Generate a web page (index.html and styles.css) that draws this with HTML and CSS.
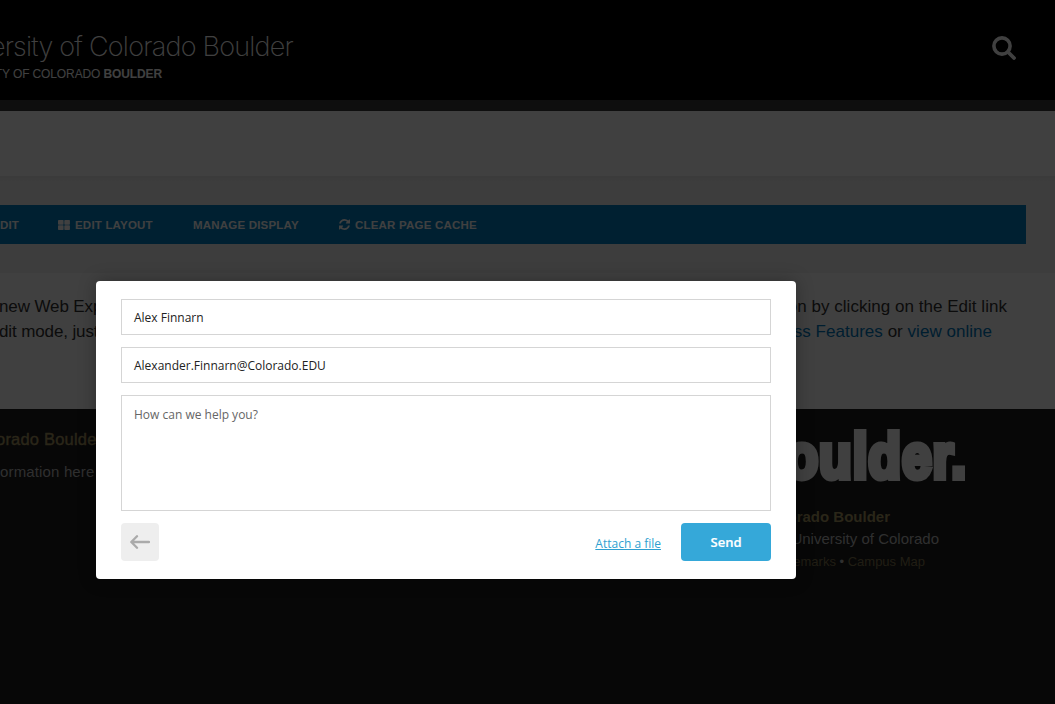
FILE: index.html
```
<!DOCTYPE html>
<html lang="en">
<head>
<meta charset="utf-8">
<title>University of Colorado Boulder</title>
<link rel="stylesheet" href="styles.css">
</head>
<body>
<div class="page">
  <header class="header">
    <div class="brand">
      <div class="site-name"><span>ersity of Colorado Boulder</span></div>
      <div class="site-sub"><span>TY OF COLORADO <b>BOULDER</b></span></div>
    </div>
    <svg class="search" width="24" height="24" viewBox="0 0 24 24" fill="none"><circle cx="10" cy="10" r="8.1" stroke="#fff" stroke-width="3.6"/><path d="M16 16l6 6" stroke="#fff" stroke-width="3.8" stroke-linecap="round"/></svg>
  </header>
  <div class="strip"></div>
  <div class="menu"></div>
  <section class="tools">
    <nav class="toolbar">
      <span class="tool edit"><i>DIT</i></span>
      <span class="tool layout"><svg width="12" height="10" viewBox="0 0 12 10" fill="#fff"><rect width="5.6" height="4.7" rx=".7"/><rect x="6.3" width="5.6" height="4.7" rx=".7"/><rect y="5.3" width="5.6" height="4.7" rx=".7"/><rect x="6.3" y="5.3" width="5.6" height="4.7" rx=".7"/></svg><i>EDIT LAYOUT</i></span>
      <span class="tool display"><i>MANAGE DISPLAY</i></span>
      <span class="tool cache"><svg width="11" height="11" viewBox="0 0 1536 1536" fill="#fff"><path d="M1511 928q0 5-1 7-64 268-268 434.500t-478 166.500q-146 0-282.500-55t-243.500-157l-129 129q-19 19-45 19t-45-19-19-45v-448q0-26 19-45t45-19h448q26 0 45 19t19 45-19 45l-137 137q71 66 161 102t187 36q134 0 250-65t186-179q11-17 53-117 8-23 30-23h192q13 0 22.500 9.500t9.500 22.500zm25-800v448q0 26-19 45t-45 19h-448q-26 0-45-19t-19-45 19-45l138-138q-148-137-349-137-134 0-250 65t-186 179q-11 17-53 117-8 23-30 23h-199q-13 0-22.500-9.500t-9.500-22.500v-7q65-268 270-434.500t480-166.500q146 0 284 55.500t245 156.500l130-129q19-19 45-19t45 19 19 45z"/></svg><i>CLEAR PAGE CACHE</i></span>
    </nav>
  </section>
  <main class="content">
    <div class="line"><span class="l1">new Web Express</span><span class="r1">section by clicking on the Edit link</span></div>
    <div class="line"><span class="l2">dit mode, just</span><span class="r2"><a>Express Features</a> or <a>view online</a></span></div>
  </main>
  <footer class="footer">
    <div class="foot-left">
      <div class="foot-title"><span>orado Boulder</span></div>
      <div class="foot-info"><span>ormation here</span></div>
    </div>
    <div class="foot-right">
      <div class="be"><span>boulder.</span></div>
      <div class="cu"><span>Colorado Boulder</span></div>
      <div class="regents"><span>University of Colorado</span></div>
      <div class="links"><span><a>Trademarks</a> • <a>Campus Map</a></span></div>
    </div>
  </footer>
</div>
<div class="overlay">
  <form class="modal">
    <div class="field">Alex Finnarn</div>
    <div class="field email">Alexander.Finnarn@Colorado.EDU</div>
    <div class="field message">How can we help you?</div>
    <div class="actions">
      <button class="back" type="button" aria-label="Back"><svg width="20" height="14" viewBox="0 0 20 14" fill="none" stroke="#aaa" stroke-width="2.3" stroke-linecap="round" stroke-linejoin="round"><path d="M19 7H1.4M7 1.2L1.3 7 7 12.8"/></svg></button>
      <a class="attach">Attach a file</a>
      <button class="send" type="button">Send</button>
    </div>
  </form>
</div>
</body>
</html>
```
FILE: styles.css
```
* { box-sizing: border-box; }
body { margin: 0; background: #000; font-family: "Liberation Sans", Arial, sans-serif; }
i { font-style: normal; }
.page { width: 1055px; height: 704px; overflow: hidden; white-space: nowrap; }
.header { height: 100px; background: #000; color: #fff; display: flex; justify-content: space-between; padding: 30px 39px 0 0; }
.brand { width: 293px; }
.site-name, .site-sub { display: flex; justify-content: flex-end; }
.site-name { font: 200 27px/34px Inter, sans-serif; letter-spacing: -0.77px; }
.site-sub { width: 162px; font-size: 12px; line-height: 20px; letter-spacing: -.12px; }
.search { margin-top: 6px; }
.strip { height: 11px; background: #383838; }
.menu { height: 65px; background: #fff; }
.tools { height: 97px; padding: 29px 29px 0 0; background: linear-gradient(#e9e9e9, #f1f1f1 5px); }
.toolbar { height: 39px; background: #0080c4; color: #fff; display: flex; align-items: center; font-size: 11.5px; font-weight: bold; letter-spacing: .2px; }
.tool { display: flex; align-items: center; gap: 5px; }
.edit { width: 19px; justify-content: flex-end; }
.layout { margin-left: 39px; width: 135px; }
.display { width: 146px; }
.content { height: 136px; background: #fff; color: #333; padding: 21px 48px 0 0; font-size: 17px; line-height: 25px; }
.line { display: flex; justify-content: space-between; }
.l1, .l2 { margin-left: -1px; letter-spacing: -.12px; }
.content a { color: #0078be; }
.r1 { letter-spacing: .03px; }
.r2 { margin-right: 15px; letter-spacing: .03px; }
.footer { height: 295px; background: #1c1c1c; display: flex; justify-content: space-between; color: #fff; }
.foot-left { padding-top: 19px; color: #bbb; }
.foot-title { margin-left: -4px; font-size: 16.5px; line-height: 22px; color: #a69662; letter-spacing: .2px; -webkit-text-stroke: .4px #a69662; }
.foot-info { font-size: 15px; line-height: 20px; margin-top: 12px; letter-spacing: .15px; }
.foot-right { width: 300px; padding-top: 10px; }
.foot-right > div { display: flex; justify-content: flex-end; }
.be { width: 212px; height: 87px; font-size: 63px; font-weight: bold; line-height: 74px; letter-spacing: 1px; }
.be span { transform: scaleX(.85); transform-origin: right; -webkit-text-stroke: 6px #fff; }
.cu { width: 135px; font-size: 15px; line-height: 22px; font-weight: bold; color: #a69662; }
.regents { width: 184px; font-size: 15px; line-height: 22px; color: #bbb; }
.links { width: 170px; font-size: 13px; line-height: 24px; color: #bbb; }
.links a { color: #81754f; }
.overlay { position: absolute; inset: 0; height: 704px; background: rgba(0,0,0,.75); padding: 281px 0 0 96px; }
.modal { width: 700px; height: 298px; padding: 18px 25px; border-radius: 4px; background: #fff; box-shadow: 0 0 18px rgba(0,0,0,.3); font: 12px "Open Sans", sans-serif; }
.field { height: 36px; margin-bottom: 12px; padding: 1px 12px 0; border: 1px solid #d5d5d5; color: #222; line-height: 34px; }
.message { height: 116px; padding-top: 2px; color: #666; }
.actions { display: flex; align-items: center; }
.back { width: 38px; height: 38px; padding: 0; border: 0; border-radius: 4px; background: #eee; display: grid; place-items: center; }
.attach { margin-left: auto; margin-right: 20px; padding-top: 2px; color: #2f9fd0; text-decoration: underline; }
.send { width: 90px; height: 38px; border: 0; border-radius: 4px; background: #35a8d9; color: #fff; font: 600 13px "Open Sans", sans-serif; -webkit-text-stroke: .2px #fff; }
```
